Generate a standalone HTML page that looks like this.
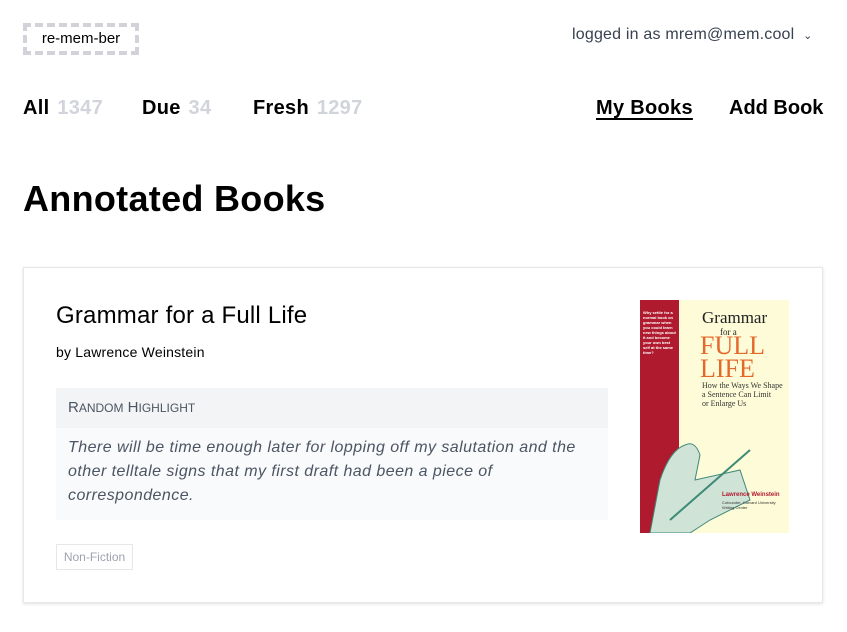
<!DOCTYPE html>
<html><head><meta charset="utf-8"><style>
*{margin:0;padding:0;box-sizing:border-box}
body{width:847px;height:632px;background:#fff;font-family:"Liberation Sans",sans-serif;color:#000;position:relative;overflow:hidden}
.a{position:absolute;white-space:nowrap}
.logo{left:23px;top:23px;width:116px;height:32px;border:4px dashed #d1d3d9;font-size:15px;line-height:24px;text-align:center}
.nav{font-size:20px;font-weight:bold;top:97px;letter-spacing:0.3px}
.nav span{color:#d1d5db;margin-left:2px}
.card{left:23px;top:267px;width:800px;height:336px;border:1px solid #e5e7eb;box-shadow:0 1px 3px rgba(0,0,0,.12)}
</style></head><body>
<div class="a logo">re-mem-ber</div>
<div class="a" style="left:572px;top:26px;font-size:16px;color:#374151;letter-spacing:0.2px">logged in as mrem@mem.cool <span style="font-size:11px;margin-left:4px">&#8964;</span></div>
<div class="a nav" style="left:23px">All <span>1347</span></div>
<div class="a nav" style="left:142px">Due <span>34</span></div>
<div class="a nav" style="left:253px">Fresh <span>1297</span></div>
<div class="a nav" style="left:596px;text-decoration:underline;text-underline-offset:4px">My Books</div>
<div class="a nav" style="left:729px;letter-spacing:0">Add Book</div>
<div class="a" style="left:23px;top:178px;font-size:36px;font-weight:bold;letter-spacing:0.3px">Annotated Books</div>
<div class="a card"></div>
<div class="a" style="left:56px;top:302px;font-size:24px;letter-spacing:0.2px">Grammar for a Full Life</div>
<div class="a" style="left:56px;top:344px;font-size:14px;letter-spacing:0.2px">by Lawrence Weinstein</div>
<div class="a" style="left:56px;top:388px;width:552px;height:40px;background:#f3f4f6;padding:11px 12px;font-size:15px;color:#4b5563">R<span style="font-size:12px">ANDOM</span> H<span style="font-size:12px">IGHLIGHT</span></div>
<div class="a" style="left:56px;top:428px;width:552px;height:92px;background:#f9fafb;padding:8px 20px 8px 12px;font-size:16px;line-height:24px;font-style:italic;color:#4b5563;white-space:normal;letter-spacing:0.45px">There will be time enough later for lopping off my salutation and the other telltale signs that my first draft had been a piece of correspondence.</div>
<div class="a" style="left:56px;top:544px;height:26px;width:77px;border:1px solid #e5e7eb;font-size:12px;color:#9ca3af;line-height:24px;text-align:center">Non-Fiction</div>
<div class="a" style="left:640px;top:300px;width:149px;height:233px;background:#fdfbd8;overflow:hidden">
<div style="position:absolute;left:0;top:0;width:39px;height:233px;background:#b01a2e"></div>
<div style="position:absolute;left:3px;top:10px;width:34px;font-size:4px;line-height:5px;color:#fff;font-weight:bold;white-space:normal">Why settle for a normal book on grammar when you could learn new things about it and become your own best self at the same time?</div>
<div style="position:absolute;left:62px;top:8px;font-family:'Liberation Serif',serif;font-size:17px;color:#222">Grammar</div>
<div style="position:absolute;left:80px;top:27px;font-family:'Liberation Serif',serif;font-size:9px;color:#222">for a</div>
<div style="position:absolute;left:60px;top:34px;font-family:'Liberation Serif',serif;font-size:26px;line-height:23px;color:#e5682b">FULL<br>LIFE</div>
<div style="position:absolute;left:62px;top:81px;font-family:'Liberation Serif',serif;font-size:8px;line-height:9px;color:#333">How the Ways We Shape<br>a Sentence Can Limit<br>or Enlarge Us</div>
<svg style="position:absolute;left:0;top:110px" width="149" height="123"><path d="M10 123 L20 70 Q30 40 45 35 Q55 30 60 45 L55 70 L100 60 L110 90 L70 110 L50 123Z" fill="#cfe3d6" stroke="#3d8a78" stroke-width="1"/><path d="M30 110 L110 40" stroke="#3d8a78" stroke-width="2"/></svg>
<div style="position:absolute;left:82px;top:192px;font-size:6px;font-weight:bold;color:#b01a2e">Lawrence Weinstein</div>
<div style="position:absolute;left:82px;top:200px;font-size:4px;line-height:5px;color:#333">Cofounder, Harvard University<br>Writing Center</div>
</div>
</body></html>
